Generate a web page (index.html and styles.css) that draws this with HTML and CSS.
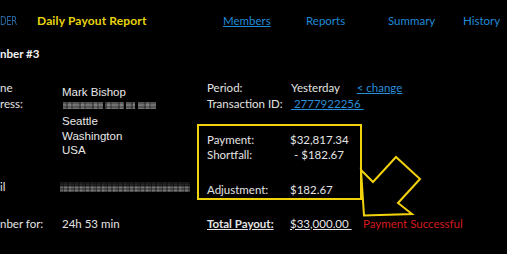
FILE: index.html
```html
<!DOCTYPE html>
<html>
<head>
<meta charset="utf-8">
<link rel="stylesheet" href="styles.css">
</head>
<body>
<div class="page">
  <header class="header">
    <span class="logo">DER</span>
    <span class="title">Daily Payout Report</span>
    <nav class="nav">
      <a class="nav-link current">Members</a>
      <a class="nav-link reports">Reports</a>
      <a class="nav-link summary">Summary</a>
      <a class="nav-link history">History</a>
    </nav>
  </header>

  <h1 class="heading">nber #3</h1>

  <div class="panels">
    <div class="left">
      <div class="labels">
        <div class="lab">ne</div>
        <div class="lab">ress:</div>
        <div class="lab-gap"></div>
        <div class="lab">il</div>
      </div>
      <div class="values">
        <div class="val">Mark Bishop</div>
        <div class="val"><span class="blur blur-addr"></span></div>
        <div class="val">Seattle</div>
        <div class="val">Washington</div>
        <div class="val">USA</div>
        <div class="val-gap"></div>
        <div class="val"><span class="blur blur-mail"></span></div>
      </div>
    </div>

    <div class="right">
      <div class="info">
        <div class="lab">Period:</div>
        <div class="rv">Yesterday <a class="link change">&lt; change</a></div>
        <div class="lab">Transaction ID:</div>
        <div class="rv"><a class="link txid">&nbsp;2777922256&nbsp;</a></div>
      </div>
      <div class="box">
        <div class="lab">Payment:</div>
        <div class="rv">$32,817.34</div>
        <div class="lab">Shortfall:</div>
        <div class="rv shortfall">- $182.67</div>
        <div class="box-gap"></div>
        <div class="lab">Adjustment:</div>
        <div class="rv">$182.67</div>
      </div>
    </div>
  </div>

  <div class="footer">
    <div class="foot-left">
      <div class="lab foot-lab">nber for:</div>
      <div class="lab">24h 53 min</div>
    </div>
    <div class="foot-right">
      <div class="lab total">Total Payout:</div>
      <div class="lab total-val">$33,000.00&nbsp;</div>
      <div class="success">Payment Successful</div>
    </div>
  </div>

  <svg class="arrow" width="507" height="254" viewBox="0 0 507 254">
    <polygon points="361,170 373,182 396,157 420,179 398,203 412,214 364,215.5" fill="none" stroke="#f2d20c" stroke-width="2" stroke-linejoin="miter"/>
  </svg>
</div>
</body>
</html>
```

FILE: styles.css
```css
html, body {
  margin: 0;
  padding: 0;
  background: #000;
  overflow: hidden;
}
body {
  width: 507px;
  height: 254px;
  font-family: Lato, "Open Sans", sans-serif;
  font-size: 11.5px;
  color: #e4e4e4;
}
.page {
  position: relative;
  width: 507px;
  height: 254px;
  padding-top: 13px;
  box-sizing: border-box;
}
.header {
  display: flex;
  align-items: center;
  height: 16px;
  line-height: 16px;
}
.logo {
  display: inline-block;
  width: 37px;
  font-family: "DejaVu Sans Condensed", "Liberation Sans", sans-serif;
  font-size: 13px;
  font-weight: 200;
  color: #2a6aa6;
  letter-spacing: -0.3px;
  transform: scaleX(0.72);
  transform-origin: left center;
}
.title {
  display: inline-block;
  width: 186px;
  font-weight: bold;
  font-size: 12px;
  letter-spacing: 0.15px;
  color: #e9d50c;
}
.nav {
  display: flex;
}
.nav-link {
  color: #1f8ad6;
  font-size: 11.5px;
}
.nav-link.current {
  text-decoration: underline;
  width: 83px;
}
.reports { width: 82px; }
.summary { width: 75px; }

.heading {
  margin: 17px 0 0 0;
  font-size: 11.5px;
  font-weight: bold;
  line-height: 16px;
  color: #f0f0f0;
}

.panels {
  display: flex;
  align-items: flex-start;
  margin-top: 18px;
}
.left {
  display: flex;
  width: 197px;
}
.labels {
  width: 62px;
  line-height: 16px;
}
.lab-gap { height: 67px; }
.values {
  padding-top: 5px;
  font-family: "Liberation Sans", Arial, sans-serif;
  font-size: 11.5px;
  line-height: 14.5px;
  color: #e8e8e8;
}
.val-gap { height: 22px; }
.blur {
  display: inline-block;
  vertical-align: middle;
}
.blur-addr {
  width: 93px;
  height: 7px;
  margin-top: -3px;
  margin-left: 1px;
  background:
    repeating-linear-gradient(180deg, rgba(0,0,0,0.25) 0 2px, rgba(0,0,0,0) 2px 4px),
    repeating-linear-gradient(90deg, #6e6e6e 0 3px, #4c4c4c 3px 5px, #7c7c7c 5px 8px, #585858 8px 10px, #727272 10px 13px);
  -webkit-mask: linear-gradient(90deg, #000 0 40px, transparent 40px 42px, #000 42px 61px, transparent 61px 63px, #000 63px 72px, transparent 72px 75px, #000 75px);
  mask: linear-gradient(90deg, #000 0 40px, transparent 40px 42px, #000 42px 61px, transparent 61px 63px, #000 63px 72px, transparent 72px 75px, #000 75px);
}
.blur-mail {
  width: 130px;
  height: 10px;
  margin-left: -2px;
  background:
    repeating-linear-gradient(180deg, rgba(0,0,0,0.3) 0 2px, rgba(0,0,0,0) 2px 3px),
    repeating-linear-gradient(90deg, #626262 0 3px, #404040 3px 4px, #727272 4px 7px, #4c4c4c 7px 9px, #7a7a7a 9px 11px);
  -webkit-mask:
    linear-gradient(180deg, rgba(0,0,0,0.35) 0 4px, #000 4px);
  mask:
    linear-gradient(180deg, rgba(0,0,0,0.35) 0 4px, #000 4px);
}

.right {
  width: 160px;
}
.info {
  display: grid;
  grid-template-columns: 84px auto;
  padding-left: 10px;
  line-height: 16px;
  margin-top: -0.5px;
  white-space: nowrap;
}
.link {
  color: #2a8ed8;
  text-decoration: underline;
}
.change { margin-left: 14px; }
.box {
  display: grid;
  grid-template-columns: 83px auto;
  width: 153px;
  margin-top: 12px;
  padding: 6px 0 0 8px;
  height: 66px;
  border: 2px solid #f2d20c;
  line-height: 15px;
  white-space: nowrap;
}
.box-gap {
  grid-column: 1 / 3;
  height: 20px;
}
.shortfall { padding-left: 4px; }

.footer {
  display: flex;
  margin-top: 16px;
  line-height: 16px;
}
.foot-left {
  display: flex;
  width: 197px;
}
.foot-lab {
  width: 62px;
}
.foot-right {
  display: flex;
  padding-left: 10px;
}
.total {
  width: 83px;
  font-weight: bold;
  text-decoration: underline;
}
.total-val {
  width: 73px;
  text-decoration: underline;
}
.success {
  color: #d41a1a;
}

.arrow {
  position: absolute;
  left: 0;
  top: 0;
  pointer-events: none;
}
```
